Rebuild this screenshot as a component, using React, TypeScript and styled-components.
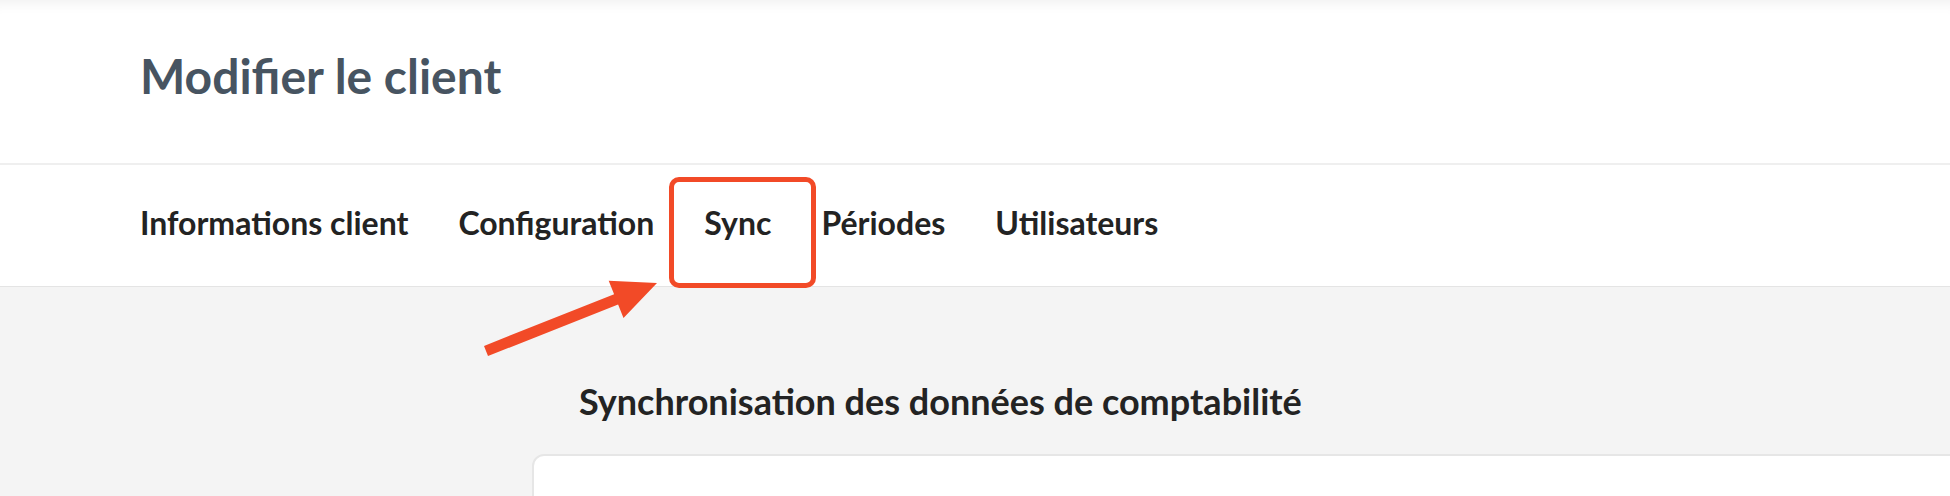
import React from "react";
import styled, { createGlobalStyle } from "styled-components";

const GlobalStyle = createGlobalStyle`
  html, body {
    margin: 0;
    padding: 0;
    height: 496px;
    overflow: hidden;
    background: #f4f4f4;
  }
  body {
    font-family: Lato, "Noto Sans", "Liberation Sans", sans-serif;
  }
  * { box-sizing: border-box; }
`;

const Page = styled.div`
  position: relative;
  width: 1950px;
  height: 496px;
  overflow: hidden;
  display: flex;
  flex-direction: column;
  background: #f4f4f4;
`;

const Header = styled.header`
  height: 165px;
  flex: none;
  background: #ffffff;
  border-bottom: 2px solid #efefef;
  box-shadow: inset 0 14px 14px -12px rgba(0, 0, 0, 0.07);
  padding: 47px 0 0 140px;
`;

const Title = styled.h1`
  margin: 0;
  font-size: 48px;
  line-height: 58px;
  font-weight: 700;
  color: #475461;
  letter-spacing: 0;
`;

const Nav = styled.nav`
  height: 122px;
  flex: none;
  background: #ffffff;
  border-bottom: 1px solid #e4e4e4;
  display: flex;
  align-items: flex-start;
  gap: 50px;
  padding: 39px 0 0 140px;
`;

const Tab = styled.a<{ $highlighted?: boolean }>`
  position: relative;
  font-size: 32px;
  line-height: 38px;
  font-weight: 700;
  color: #232323;
  text-decoration: none;
  cursor: pointer;

  ${(p) =>
    p.$highlighted &&
    `
    &::after {
      content: "";
      position: absolute;
      left: -35px;
      right: -45px;
      top: -27px;
      bottom: -46px;
      border: 5px solid #f24a27;
      border-radius: 10px;
      pointer-events: none;
    }
  `}
`;

const Content = styled.main`
  flex: 1;
  background: #f4f4f4;
  padding: 93px 0 0 532px;
  display: flex;
  flex-direction: column;
`;

const SectionTitle = styled.h2`
  margin: 0 0 31px 47px;
  font-size: 36px;
  line-height: 43px;
  font-weight: 700;
  color: #232323;
`;

const Card = styled.section`
  width: 1600px;
  height: 300px;
  background: #ffffff;
  border: 2px solid #e6e6e6;
  border-radius: 12px;
`;

const Annotation = styled.svg`
  position: absolute;
  left: 470px;
  top: 265px;
  width: 200px;
  height: 100px;
  overflow: visible;
  pointer-events: none;
`;

const tabs = [
  "Informations client",
  "Configuration",
  "Sync",
  "Périodes",
  "Utilisateurs",
];

export default function App() {
  return (
    <>
      <GlobalStyle />
      <Page>
        <Header>
          <Title>Modifier le client</Title>
        </Header>
        <Nav>
          {tabs.map((t) => (
            <Tab key={t} $highlighted={t === "Sync"}>
              {t}
            </Tab>
          ))}
        </Nav>
        <Content>
          <SectionTitle>Synchronisation des données de comptabilité</SectionTitle>
          <Card />
        </Content>
        <Annotation viewBox="0 0 200 100">
          <polygon
            points="14,80.9 144.1,29.2 138.7,15.7 187,18 153.5,52.9 148.1,39.4 18,91.1"
            fill="#f24a27"
          />
        </Annotation>
      </Page>
    </>
  );
}
